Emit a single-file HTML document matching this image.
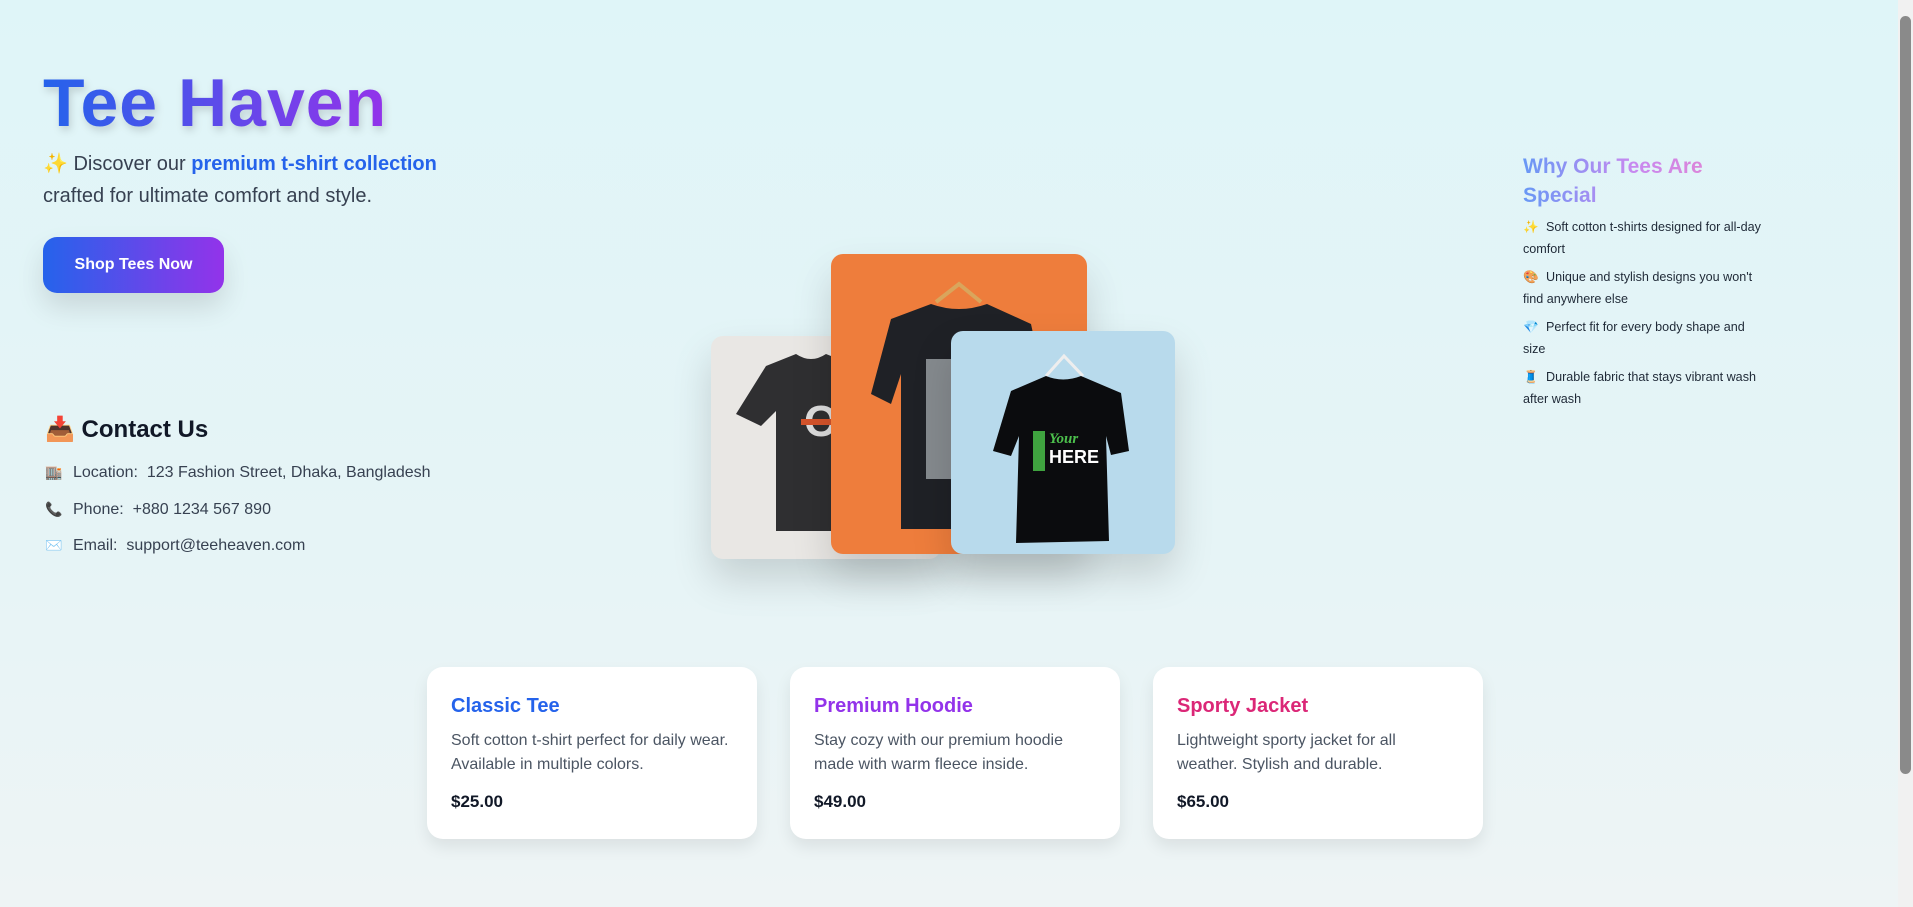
<!DOCTYPE html>
<html><head><meta charset="utf-8"><style>
*{margin:0;padding:0;box-sizing:border-box}
html,body{width:1913px;height:907px;overflow:hidden}
body{font-family:"Liberation Sans",Arial,sans-serif;background:linear-gradient(180deg,#dff5f8 0%,#e6f4f6 60%,#eef4f5 100%);position:relative;color:#374151}
.abs{position:absolute}
h1{position:absolute;left:43px;top:64px;font-size:68px;font-weight:900;letter-spacing:1px;background:linear-gradient(90deg,#2563eb,#9333ea);-webkit-background-clip:text;background-clip:text;color:transparent;filter:drop-shadow(2px 4px 4px rgba(0,0,0,.15));white-space:nowrap}
.sub{left:43px;top:148px;font-size:20px;line-height:32px;color:#374151;width:440px}
.sub b{color:#2563eb}
.btn{left:43px;top:237px;width:181px;height:56px;border-radius:14px;background:linear-gradient(90deg,#2563eb,#9333ea);color:#fff;font-weight:bold;font-size:16px;display:flex;align-items:center;justify-content:center;box-shadow:0 14px 28px rgba(0,0,0,.12)}
.ch{left:45px;top:415px;font-size:24px;font-weight:bold;color:#111827}
.cl{left:45px;font-size:16px;color:#374151}
.cl span{display:inline-block;width:28px;font-size:14px}
.img{position:absolute;border-radius:12px;overflow:hidden;box-shadow:0 20px 40px rgba(0,0,0,.15)}
.why{left:1523px;top:152px;width:300px}
.why h3{font-size:21px;line-height:29px;font-weight:900;width:220px;background:linear-gradient(90deg,#5b8ef5,#c57ef0,#e879c9);-webkit-background-clip:text;background-clip:text;color:transparent;opacity:.9}
.why p{font-size:12.6px;line-height:22px;color:#1f2937;margin-top:6px;white-space:nowrap}
.why p span{display:inline-block;width:23px}
.card{position:absolute;top:667px;width:330px;height:172px;background:#fff;border-radius:16px;box-shadow:0 8px 16px rgba(0,0,0,.08);padding:28px 24px}
.card h4{font-size:20px;font-weight:bold}
.card p{font-size:16px;line-height:24px;color:#4b5563;margin-top:11px}
.card .pr{font-size:17px;font-weight:bold;color:#111827;margin-top:15px}
.sb{right:0;top:0;width:15px;height:907px;background:#f1f1f1}
.th{right:2px;top:16px;width:11px;height:758px;background:#8a8a8a;border-radius:6px}
</style></head><body>
<h1>Tee Haven</h1>
<div class="abs sub">✨ Discover our <b>premium t-shirt collection</b> crafted for ultimate comfort and style.</div>
<div class="abs btn">Shop Tees Now</div>
<div class="abs ch">📥 Contact Us</div>
<div class="abs cl" style="top:464px"><span>🏬</span>Location:&nbsp; 123 Fashion Street, Dhaka, Bangladesh</div>
<div class="abs cl" style="top:501px"><span>📞</span>Phone:&nbsp; +880 1234 567 890</div>
<div class="abs cl" style="top:537px"><span>✉️</span>Email:&nbsp; support@teeheaven.com</div>

<div class="img" style="left:711px;top:336px;width:230px;height:223px;background:#e9e7e4">
<svg width="230" height="223"><path d="M55 30 L85 18 Q100 28 115 18 L140 28 L175 75 L150 88 L140 75 L140 195 L65 195 L65 75 L50 90 L25 78 Z" fill="#2f2f31"/><text x="93" y="100" font-family="Liberation Sans" font-weight="bold" font-size="44" fill="#ddd">OI</text><rect x="90" y="83" width="40" height="6" fill="#d4532b"/></svg></div>
<div class="img" style="left:831px;top:254px;width:256px;height:300px;background:#ee7d3c">
<svg width="256" height="300"><path d="M105 48 L128 30 L150 48" stroke="#d9a55c" stroke-width="4" fill="none"/><path d="M60 65 L100 50 Q128 60 156 50 L200 70 L215 140 L190 145 L185 120 L185 275 L70 275 L70 120 L60 150 L40 140 Z" fill="#1f2126"/><rect x="95" y="105" width="40" height="120" fill="#c9d1d4" opacity=".6"/></svg></div>
<div class="img" style="left:951px;top:331px;width:224px;height:223px;background:#b8daec">
<svg width="224" height="223"><path d="M95 45 L113 25 L132 45" stroke="#eee" stroke-width="3" fill="none"/><path d="M60 60 L95 45 Q112 52 130 45 L170 62 L178 120 L160 124 L155 105 L158 210 L65 212 L68 105 L60 125 L42 120 Z" fill="#0b0c0e"/><rect x="82" y="100" width="12" height="40" fill="#3fa33f"/><text x="98" y="112" font-family="Liberation Serif" font-style="italic" font-weight="bold" font-size="15" fill="#4cc04c">Your</text><text x="98" y="132" font-family="Liberation Sans" font-weight="bold" font-size="18" fill="#fff">HERE</text></svg></div>

<div class="abs why"><h3>Why Our Tees Are Special</h3>
<p><span>✨</span>Soft cotton t-shirts designed for all-day<br>comfort</p>
<p><span>🎨</span>Unique and stylish designs you won't<br>find anywhere else</p>
<p><span>💎</span>Perfect fit for every body shape and<br>size</p>
<p><span>🧵</span>Durable fabric that stays vibrant wash<br>after wash</p></div>

<div class="card" style="left:427px"><h4 style="color:#2563eb">Classic Tee</h4><p>Soft cotton t-shirt perfect for daily wear. Available in multiple colors.</p><div class="pr">$25.00</div></div>
<div class="card" style="left:790px"><h4 style="color:#9333ea">Premium Hoodie</h4><p>Stay cozy with our premium hoodie made with warm fleece inside.</p><div class="pr">$49.00</div></div>
<div class="card" style="left:1153px"><h4 style="color:#db2777">Sporty Jacket</h4><p>Lightweight sporty jacket for all weather. Stylish and durable.</p><div class="pr">$65.00</div></div>

<div class="abs sb"></div><div class="abs th"></div>
</body></html>
